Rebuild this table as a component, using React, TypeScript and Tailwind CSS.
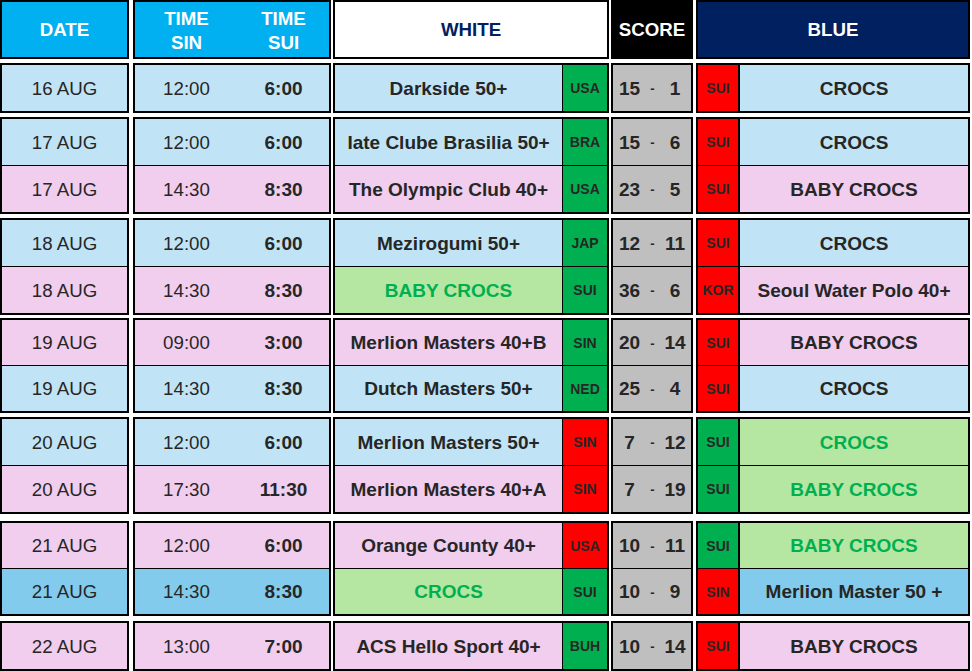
type Match = {
  date: string;
  sin: string;
  sui: string;
  white: string;
  wc: string;
  wcRed?: boolean;
  s1: string;
  s2: string;
  bc: string;
  bcGreen?: boolean;
  blue: string;
  bg: string;
  whiteHl?: boolean;
  blueHl?: boolean;
};

const LB = "bg-[#c0e4f5]";
const PK = "bg-[#f1cdee]";
const DB = "bg-[#82cbec]";

const groups: { mt: string; h: string; rows: Match[] }[] = [
  {
    mt: "mt-[4px]",
    h: "h-[50px]",
    rows: [
      { date: "16 AUG", sin: "12:00", sui: "6:00", white: "Darkside 50+", wc: "USA", s1: "15", s2: "1", bc: "SUI", blue: "CROCS", bg: LB },
    ],
  },
  {
    mt: "mt-[4px]",
    h: "h-[97px]",
    rows: [
      { date: "17 AUG", sin: "12:00", sui: "6:00", white: "Iate Clube Brasilia 50+", wc: "BRA", s1: "15", s2: "6", bc: "SUI", blue: "CROCS", bg: LB },
      { date: "17 AUG", sin: "14:30", sui: "8:30", white: "The Olympic Club 40+", wc: "USA", s1: "23", s2: "5", bc: "SUI", blue: "BABY CROCS", bg: PK },
    ],
  },
  {
    mt: "mt-[4px]",
    h: "h-[97px]",
    rows: [
      { date: "18 AUG", sin: "12:00", sui: "6:00", white: "Mezirogumi 50+", wc: "JAP", s1: "12", s2: "11", bc: "SUI", blue: "CROCS", bg: LB },
      { date: "18 AUG", sin: "14:30", sui: "8:30", white: "BABY CROCS", whiteHl: true, wc: "SUI", s1: "36", s2: "6", bc: "KOR", blue: "Seoul Water Polo 40+", bg: PK },
    ],
  },
  {
    mt: "mt-[3px]",
    h: "h-[95px]",
    rows: [
      { date: "19 AUG", sin: "09:00", sui: "3:00", white: "Merlion Masters 40+B", wc: "SIN", s1: "20", s2: "14", bc: "SUI", blue: "BABY CROCS", bg: PK },
      { date: "19 AUG", sin: "14:30", sui: "8:30", white: "Dutch Masters 50+", wc: "NED", s1: "25", s2: "4", bc: "SUI", blue: "CROCS", bg: LB },
    ],
  },
  {
    mt: "mt-[4px]",
    h: "h-[97px]",
    rows: [
      { date: "20 AUG", sin: "12:00", sui: "6:00", white: "Merlion Masters 50+", wc: "SIN", wcRed: true, s1: "7", s2: "12", bc: "SUI", bcGreen: true, blue: "CROCS", blueHl: true, bg: LB },
      { date: "20 AUG", sin: "17:30", sui: "11:30", white: "Merlion Masters 40+A", wc: "SIN", wcRed: true, s1: "7", s2: "19", bc: "SUI", bcGreen: true, blue: "BABY CROCS", blueHl: true, bg: PK },
    ],
  },
  {
    mt: "mt-[7px]",
    h: "h-[95px]",
    rows: [
      { date: "21 AUG", sin: "12:00", sui: "6:00", white: "Orange County 40+", wc: "USA", wcRed: true, s1: "10", s2: "11", bc: "SUI", bcGreen: true, blue: "BABY CROCS", blueHl: true, bg: PK },
      { date: "21 AUG", sin: "14:30", sui: "8:30", white: "CROCS", whiteHl: true, wc: "SUI", s1: "10", s2: "9", bc: "SIN", blue: "Merlion Master 50 +", bg: DB },
    ],
  },
  {
    mt: "mt-[5px]",
    h: "h-[50px]",
    rows: [
      { date: "22 AUG", sin: "13:00", sui: "7:00", white: "ACS Hello Sport 40+", wc: "BUH", s1: "10", s2: "14", bc: "SUI", blue: "BABY CROCS", bg: PK },
    ],
  },
];

const line = (i: number) => (i > 0 ? "border-t border-black" : "");

function Group({ g }: { g: (typeof groups)[number] }) {
  return (
    <div className={`flex ${g.mt} ${g.h}`}>
      <div className="w-[129px] border-2 border-black flex flex-col">
        {g.rows.map((r, i) => (
          <div key={i} className={`flex-1 flex items-center justify-center pt-[2px] text-[18.7px] ${r.bg} ${line(i)}`}>
            {r.date}
          </div>
        ))}
      </div>

      <div className="w-[198px] ml-[4px] border-2 border-black flex flex-col">
        {g.rows.map((r, i) => (
          <div key={i} className={`flex-1 flex items-center pt-[2px] text-[18.7px] ${r.bg} ${line(i)}`}>
            <div className="w-[103px] text-center">{r.sin}</div>
            <div className="flex-1 text-center font-bold text-[19px]">{r.sui}</div>
          </div>
        ))}
      </div>

      <div className="w-[276px] ml-[2px] border-2 border-black flex flex-col">
        {g.rows.map((r, i) => (
          <div key={i} className={`flex-1 flex ${line(i)}`}>
            <div
              className={`flex-1 flex items-center justify-center pt-[2px] font-bold text-[19px] ${
                r.whiteHl ? "bg-[#b5e6a2] text-[#00b050]" : r.bg
              }`}
            >
              {r.white}
            </div>
            <div
              className={`w-[45px] border-l border-black flex items-center justify-center pt-[1px] font-bold text-[14px] ${
                r.wcRed ? "bg-[#ff0000]" : "bg-[#00b050]"
              }`}
            >
              {r.wc}
            </div>
          </div>
        ))}
      </div>

      <div className="w-[82px] ml-[2px] border-2 border-black flex flex-col">
        {g.rows.map((r, i) => (
          <div key={i} className={`flex-1 flex items-center pt-[2px] bg-[#bfbfbf] font-bold ${line(i)}`}>
            <div className="w-[33px] text-center text-[19px]">{r.s1}</div>
            <div className="w-[13px] text-center text-[13px]">-</div>
            <div className="flex-1 text-center text-[19px]">{r.s2}</div>
          </div>
        ))}
      </div>

      <div className="w-[274px] ml-[3px] border-2 border-black flex flex-col">
        {g.rows.map((r, i) => (
          <div key={i} className={`flex-1 flex ${line(i)}`}>
            <div
              className={`w-[42px] border-r-2 border-black flex items-center justify-center pt-[1px] font-bold text-[14px] ${
                r.bcGreen ? "bg-[#00b050]" : "bg-[#ff0000]"
              }`}
            >
              {r.bc}
            </div>
            <div
              className={`flex-1 flex items-center justify-center pt-[2px] font-bold text-[19px] ${
                r.blueHl ? "bg-[#b5e6a2] text-[#00b050]" : r.bg
              }`}
            >
              {r.blue}
            </div>
          </div>
        ))}
      </div>
    </div>
  );
}

export default function App() {
  return (
    <div className="w-[972px] h-[671px] overflow-hidden bg-white text-[#262626] font-['Liberation_Sans',Arial,sans-serif]">
      <div className="flex h-[59px] font-bold text-[18.7px]">
        <div className="w-[129px] border-2 border-black bg-[#00b0f0] text-white flex items-center justify-center pt-[2px]">
          DATE
        </div>
        <div className="w-[198px] ml-[4px] border-2 border-black bg-[#00b0f0] text-white flex items-center pt-[2px] leading-[24px]">
          <div className="w-[103px] text-center">
            TIME
            <br />
            SIN
          </div>
          <div className="flex-1 text-center">
            TIME
            <br />
            SUI
          </div>
        </div>
        <div className="w-[276px] ml-[2px] border-2 border-black bg-white text-[#002060] flex items-center justify-center pt-[2px]">
          WHITE
        </div>
        <div className="w-[82px] ml-[2px] border-2 border-black bg-black text-white flex items-center justify-center pt-[2px]">
          SCORE
        </div>
        <div className="w-[274px] ml-[3px] border-2 border-black bg-[#002060] text-white flex items-center justify-center pt-[2px]">
          BLUE
        </div>
      </div>

      {groups.map((g, i) => (
        <Group key={i} g={g} />
      ))}
    </div>
  );
}
